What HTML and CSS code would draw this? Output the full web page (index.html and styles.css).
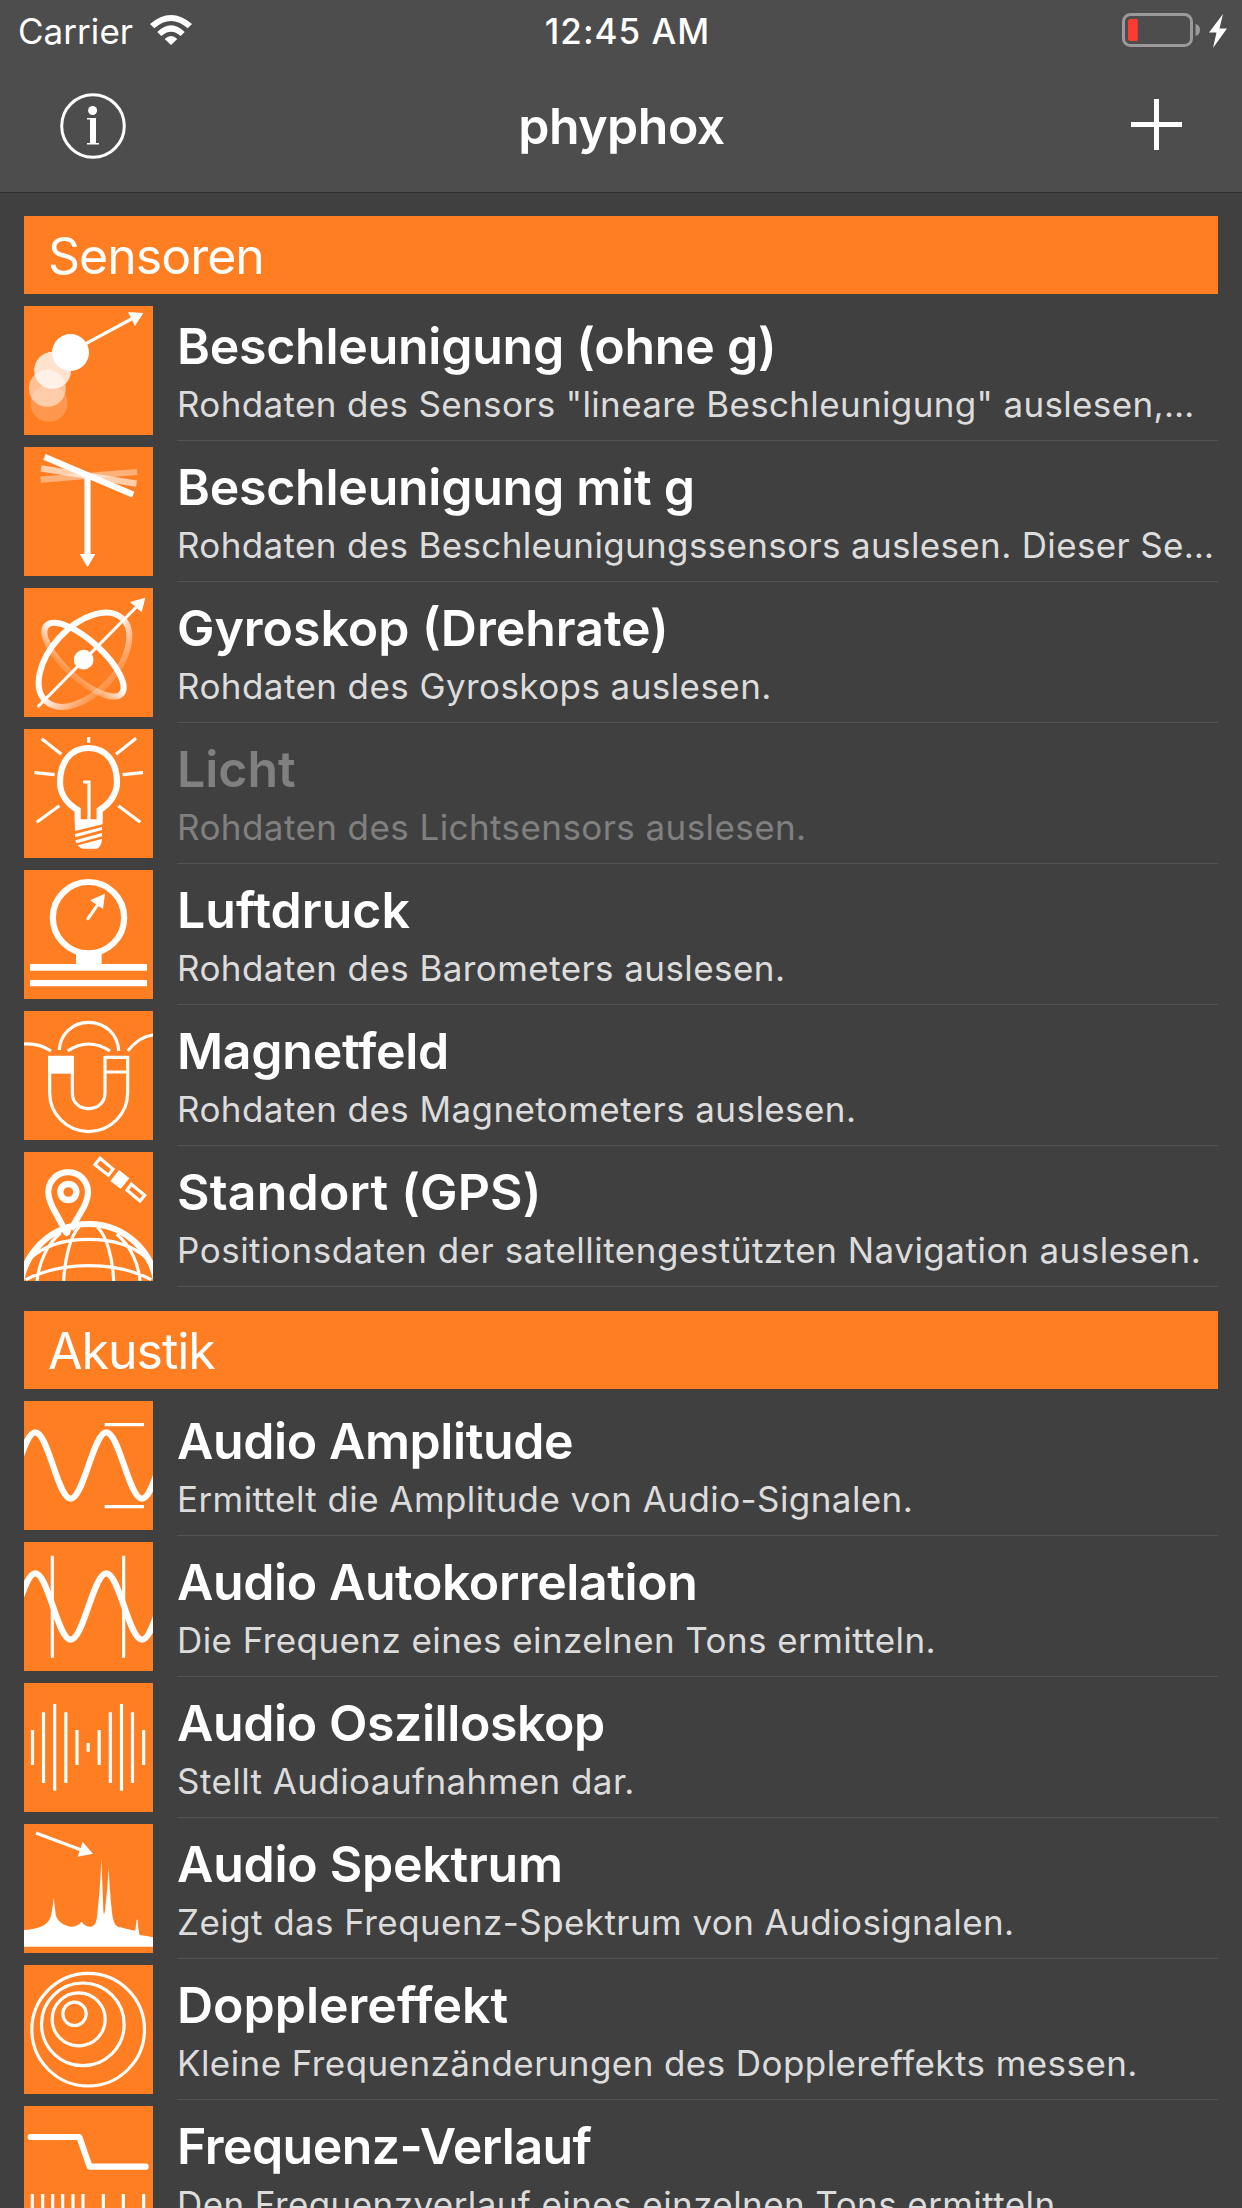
FILE: index.html
```html
<!DOCTYPE html>
<html lang="de">
<head>
<meta charset="utf-8">
<title>phyphox</title>
<link rel="stylesheet" href="styles.css">
</head>
<body>
<header class="topbar">
  <div class="status">
    <div class="status-left">
      <span class="carrier">Carrier</span>
      <svg class="wifi" viewBox="0 0 126 90"><path d="M0 27Q63 -27 126 27L113 40Q63 -4 13 40Z"/><path d="M22 51Q63 11 104 51L92 63Q63 37 34 63Z"/><path d="M44 72Q63 54 82 72L63 90Z"/></svg>
    </div>
    <span class="clock">12:45 AM</span>
    <svg class="battery" viewBox="0 0 107 36"><rect x="1.5" y="2.5" width="68" height="31" rx="7" fill="none" stroke="#9a9a9a" stroke-width="3"/><rect x="6" y="7" width="9.5" height="22" rx="2.5" fill="#ff3b30"/><rect x="11" y="7" width="4.5" height="22" fill="#ff3b30"/><path d="M73.500 12Q78 13 78 18T73.500 24Z" fill="#9a9a9a"/><path d="M101 2L87 20.500H94.500L91 36L105 16.500H97.500Z" fill="#fff"/></svg>
  </div>
  <nav class="navbar">
    <svg class="info" viewBox="0 0 66 66"><circle cx="33" cy="33" r="31.300" fill="none" stroke="#fff" stroke-width="3"/><circle cx="32.600" cy="17.500" r="4.500"/><path d="M27 25H36V50H39V51.500H27V50H30V26.500H27Z"/></svg>
    <h1 class="app-title">phyphox</h1>
    <svg class="plus" viewBox="0 0 51 51"><path d="M0 23H51V28H0ZM23 0H28V51H23Z"/></svg>
  </nav>
</header>
<main class="list">
  <section class="group">
    <h2 class="group-head">Sensoren</h2>
    <article class="row">
      <svg class="icon" viewBox="0 0 387 387"><circle cx="75" cy="292" r="55.500" opacity=".2"/><circle cx="70" cy="247" r="55.500" opacity=".52"/><circle cx="86" cy="193" r="55.500" opacity=".78"/><circle cx="139.500" cy="139.500" r="55.500"/><path class="ln" d="M180 116L328 36"/><path d="M312 18L358 21L333 60Z"/></svg>
      <div class="text"><h3 class="title">Beschleunigung (ohne g)</h3><p class="sub sub-cut">Rohdaten des Sensors "lineare Beschleunigung" auslesen,…</p></div>
    </article>
    <article class="row">
      <svg class="icon" viewBox="0 0 387 387"><path class="bold" opacity=".4" d="M50 98L339 75"/><path class="bold" opacity=".62" d="M51.500 64L337.500 110"/><path class="bold" d="M61.500 29.500L327.500 143M190.500 90V322"/><path d="M167 321H214L190.500 361Z"/></svg>
      <div class="text"><h3 class="title">Beschleunigung mit g</h3><p class="sub sub-cut">Rohdaten des Beschleunigungssensors auslesen. Dieser Se…</p></div>
    </article>
    <article class="row">
      <svg class="icon" viewBox="0 0 387 387">
        <defs><linearGradient id="fade" x1="0" y1="0" x2="0" y2="1"><stop offset=".4" stop-color="#fff"/><stop offset="1" stop-color="#fff" stop-opacity=".18"/></linearGradient></defs>
        <ellipse cx="180" cy="215" rx="169" ry="99.400" transform="rotate(-47.300 180 215)" fill="none" stroke="url(#fade)" stroke-width="18"/>
        <ellipse cx="180" cy="215" rx="152" ry="56.500" transform="rotate(42.200 180 215)" fill="none" stroke="url(#fade)" stroke-width="18"/>
        <path class="ln" d="M41 357L343 51"/><path d="M364 29L318 42L353 73Z"/><circle cx="179" cy="215" r="29.500"/></svg>
      <div class="text"><h3 class="title title-wide">Gyroskop (Drehrate)</h3><p class="sub">Rohdaten des Gyroskops auslesen.</p></div>
    </article>
    <article class="row off">
      <svg class="icon" viewBox="0 0 387 387"><path class="ln" d="M194 24V41M53 29L112 76M336 28L276 76M31 131L92 137M357 131L296 137M106 230L38 280M283 230L349 280M177 159H195V272"/><path class="bold" d="M161 272V243C130 225 108 195 108 160C108 100 140 57 193.500 57S279 100 279 160C279 195 257 225 227 243V272"/><path d="M152 271H236V286L153 306ZM153 315L234 294V303L154 325ZM154 334L234 312V322L157 343ZM161 349L234 330C234 345 225 358 219 359H178Q168 358 161 349Z"/></svg>
      <div class="text"><h3 class="title title-wide">Licht</h3><p class="sub">Rohdaten des Lichtsensors auslesen.</p></div>
    </article>
    <article class="row">
      <svg class="icon" viewBox="0 0 387 387"><circle class="bold" cx="193.500" cy="143" r="107"/><path d="M156 246Q193 258 233 246V290H156ZM18 282H369V302H18ZM18 330H369V349H18Z"/><path class="ln round" d="M192 146L224 100"/><path d="M243 71L198 91L237 117Z"/></svg>
      <div class="text"><h3 class="title title-wide">Luftdruck</h3><p class="sub">Rohdaten des Barometers auslesen.</p></div>
    </article>
    <article class="row">
      <svg class="icon" viewBox="0 0 387 387"><path class="ln" d="M106 117C108 70 145 34 194 34S282 70 284 120M131 120Q194 78 258 120M0 99Q45 96 81 120M311 120Q346 76 387 72M77 139H145V245C145 275 166 293 193.500 293S243 275 243 245V139H311V245A117 117 0 0 1 77 245ZM243 183H311"/><path d="M73 135H149V188H73Z"/></svg>
      <div class="text"><h3 class="title">Magnetfeld</h3><p class="sub">Rohdaten des Magnetometers auslesen.</p></div>
    </article>
    <article class="row">
      <svg class="icon" viewBox="0 0 387 387"><circle class="bold" cx="194" cy="421" r="205"/><path class="ln" d="M15 322C60 280 120 262 194 262S328 280 372 322M5 383C70 350 130 341 194 341S320 350 382 383M39 387C45 330 70 275 110 243M119 387C122 320 140 250 165 225M269 387C266 320 250 255 220 225M348 387C345 340 320 280 278 247"/><path d="M110 222H146L137 247Q128 258 119 247Z"/><path class="bold" d="M126 240L85 164Q73 138 73 120A59.500 59.500 0 0 1 192 120Q192 138 180 164L141 232"/><circle cx="133" cy="120" r="24" fill="none" stroke="#fff" stroke-width="19"/><path d="M285 54L316 79L290 111L259 87Z"/><path class="ln" d="M228 19L267 51L253 70L213 38ZM322 97L362 130L348 147L309 115Z"/></svg>
      <div class="text"><h3 class="title title-widest">Standort (GPS)</h3><p class="sub sub-wide">Positionsdaten der satellitengestützten Navigation auslesen.</p></div>
    </article>
  </section>
  <section class="group">
    <h2 class="group-head">Akustik</h2>
    <article class="row">
      <svg class="icon" viewBox="0 0 387 387"><path class="bold" d="M-72.500 293C-33.700 293 -4.800 94 34 94S101.200 293 140 293S208.200 94 247 94S315.200 293 354 293S421 94 460 94"/><path class="ln" d="M242 71H360M242 317H360"/></svg>
      <div class="text"><h3 class="title title-tight">Audio Amplitude</h3><p class="sub">Ermittelt die Amplitude von Audio-Signalen.</p></div>
    </article>
    <article class="row">
      <svg class="icon" viewBox="0 0 387 387"><path class="bold" d="M-72.500 293C-33.700 293 -4.800 94 34 94S101.200 293 140 293S208.200 94 247 94S315.200 293 354 293S421 94 460 94"/><path class="ln" d="M85 41V347M299 41V347"/></svg>
      <div class="text"><h3 class="title title-tight">Audio Autokorrelation</h3><p class="sub">Die Frequenz eines einzelnen Tons ermitteln.</p></div>
    </article>
    <article class="row">
      <svg class="icon" viewBox="0 0 387 387"><path class="ln" d="M25.500 141V246M58.500 88V300M92 63V323M125.500 88V300M159 141V246M192.500 180V206M225.500 141V246M259 88V300M292.500 63V323M325.500 88V300M359 141V246"/></svg>
      <div class="text"><h3 class="title title-tight">Audio Oszilloskop</h3><p class="sub">Stellt Audioaufnahmen dar.</p></div>
    </article>
    <article class="row">
      <svg class="icon" viewBox="0 0 387 387"><path class="ln" d="M36 27L170 77"/><path d="M207 89L176 54L161 98Z"/><path d="M0 318C50 316 78 300 82 270Q88 240 89 218Q91 240 95 270C97 290 120 308 145 308Q162 306 173 293Q182 308 200 308C222 306 219 270 224 230Q231 150 232 103Q235 180 238 258Q240 285 244 250Q251 190 254 132Q257 200 263 255C267 300 275 308 290 310Q315 318 334 320Q336 300 338 287H341Q343 320 347 333Q370 336 387 340V368H0Z"/></svg>
      <div class="text"><h3 class="title">Audio Spektrum</h3><p class="sub">Zeigt das Frequenz-Spektrum von Audiosignalen.</p></div>
    </article>
    <article class="row">
      <svg class="icon" viewBox="0 0 387 387"><g class="ln"><circle cx="192.500" cy="194" r="169"/><circle cx="176.500" cy="178" r="124"/><circle cx="164" cy="163" r="79.500"/><circle cx="151.500" cy="146.500" r="35"/></g></svg>
      <div class="text"><h3 class="title title-wide">Dopplereffekt</h3><p class="sub">Kleine Frequenzänderungen des Dopplereffekts messen.</p></div>
    </article>
    <article class="row">
      <svg class="icon" viewBox="0 0 387 387"><path class="bold round" d="M20 93H166L197 182H365"/><path class="ln" d="M25 264V350M56 264V350M86 264V350M116 264V350M147 264V350M177 264V350M238 264V350M298 264V350M359 264V350"/></svg>
      <div class="text"><h3 class="title title-tightest">Frequenz-Verlauf</h3><p class="sub">Den Frequenzverlauf eines einzelnen Tons ermitteln.</p></div>
    </article>
  </section>
</main>
</body>
</html>
```
FILE: styles.css
```css
* { box-sizing: border-box; margin: 0; padding: 0; }

body {
  height: 2208px;
  overflow: hidden;
  background: #404040;
  color: #fff;
  font-family: Inter, "Liberation Sans", sans-serif;
  font-kerning: normal;
}

svg { display: block; flex: none; fill: #fff; }

/* Status and navigation bars */
.topbar {
  height: 193px;
  background: #4d4d4d;
  border-bottom: 1px solid #2e2e2e;
}

.status {
  display: grid;
  grid-template-columns: 1fr auto 1fr;
  align-items: start;
  height: 60px;
  padding: 10px 13px 0 18px;
  font-size: 35px;
  line-height: 42px;
}

.status-left { display: flex; gap: 17px; }
.carrier { letter-spacing: 0.05px; }
.wifi { width: 42px; height: 30px; margin-top: 5px; }
.clock { padding-left: 8px; font-weight: 550; letter-spacing: 1px; }
.battery { width: 107px; height: 36px; margin-top: 2px; justify-self: end; }

.navbar {
  display: grid;
  grid-template-columns: 1fr auto 1fr;
  align-items: start;
  height: 132px;
  padding: 33px 60px 0;
}

.info { width: 66px; height: 66px; }

.app-title {
  margin-top: 3px;
  padding-left: 1px;
  font-size: 50px;
  font-weight: 600;
  line-height: 60px;
  letter-spacing: -0.5px;
}

.plus { width: 51px; height: 51px; margin-top: 6px; justify-self: end; }

/* Experiment list */
.list { padding: 0 24px; }
.group { padding-top: 23px; }
.group + .group { padding-top: 24px; }

.group-head {
  height: 78px;
  margin-bottom: 6px;
  padding: 1px 0 0 24px;
  background: #ff7e22;
  font-size: 50px;
  font-weight: 400;
  line-height: 78px;
  letter-spacing: -1px;
}

.row {
  display: flex;
  gap: 24px;
  height: 141px;
}

.icon {
  width: 129px;
  height: 129px;
  margin-top: 6px;
  background: #ff7e22;
}

.text {
  flex: 1;
  min-width: 0;
  padding-top: 16px;
  border-bottom: 1px solid #535353;
  white-space: nowrap;
}

.title {
  font-size: 50px;
  font-weight: 600;
  line-height: 60px;
  letter-spacing: -0.25px;
}

.title-tightest { letter-spacing: -0.55px; }
.title-tight { letter-spacing: -0.4px; }
.title-wide { letter-spacing: 0; }
.title-widest { letter-spacing: 0.2px; }

.sub {
  margin-top: 7px;
  color: #dcdcdc;
  font-size: 35px;
  line-height: 42px;
  letter-spacing: 0.42px;
}

.sub-cut { letter-spacing: 0.35px; }
.sub-wide { letter-spacing: 0.5px; }

.off .title,
.off .sub { color: #808080; }

/* Pictogram strokes */
.ln { fill: none; stroke: #fff; stroke-width: 9.500; }
.bold { fill: none; stroke: #fff; stroke-width: 18.500; }
.round { stroke-linecap: round; stroke-linejoin: round; }
```
